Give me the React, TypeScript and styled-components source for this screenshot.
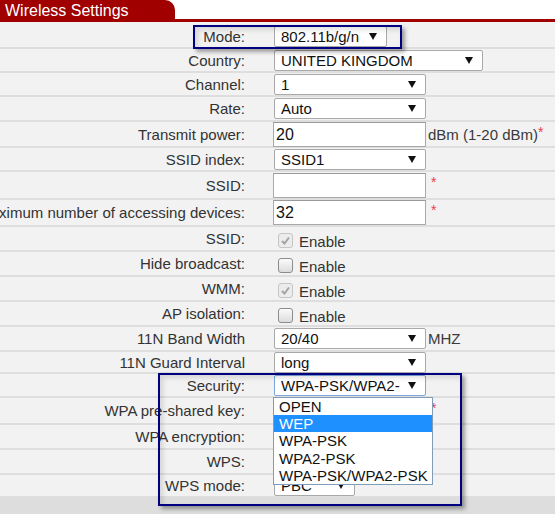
import React from 'react';
import styled, { createGlobalStyle } from 'styled-components';

const GlobalStyle = createGlobalStyle`
  html, body {
    margin: 0;
    padding: 0;
    overflow: hidden;
    background: #dddddd;
  }
  body {
    font-family: "Liberation Sans", Arial, sans-serif;
  }
`;

const Page = styled.div`
  position: relative;
  width: 100%;
  height: 514px;
  overflow: hidden;
  background: #dddddd;
`;

const Header = styled.div`
  display: flex;
  height: 19px;
  background: #ffffff;
`;

const Tab = styled.div`
  width: 175px;
  box-sizing: border-box;
  padding-left: 5px;
  background: #a00000;
  border-top-right-radius: 10px;
  color: #ffffff;
  font-size: 16px;
  line-height: 21px;
  white-space: nowrap;
  overflow: hidden;
`;

const RedRule = styled.div`
  height: 3px;
  background: #a00000;
`;

const Form = styled.div`
  background: #f2f2f2;
`;

const Row = styled.div<{ $h: number; $pt?: number }>`
  display: grid;
  grid-template-columns: 245px 1fr;
  column-gap: 28px;
  align-items: center;
  height: ${({ $h }) => $h}px;
  box-sizing: border-box;
  padding-top: ${({ $pt }) => $pt || 0}px;
  border-bottom: 2px solid #dedede;
`;

const Label = styled.div`
  display: flex;
  justify-content: flex-end;
  white-space: nowrap;
  font-size: 15px;
  color: #333333;
`;

const Cell = styled.div<{ $pt?: number }>`
  display: flex;
  align-items: center;
  min-width: 0;
  padding-top: ${({ $pt }) => $pt || 0}px;
  white-space: nowrap;
`;

const SelectBox = styled.div<{ $w: number; $focus?: boolean }>`
  position: relative;
  width: ${({ $w }) => $w}px;
  height: 21px;
  box-sizing: border-box;
  margin-left: 1px;
  padding: 0 9px 0 6px;
  display: flex;
  align-items: center;
  justify-content: space-between;
  background: #ffffff;
  border: 1px solid ${({ $focus }) => ($focus ? '#7aa7dc' : '#a9a9a9')};
  border-radius: 2px;
  font-size: 15px;
  color: #111111;
`;

const TextInput = styled.input`
  width: 153px;
  height: 25px;
  box-sizing: border-box;
  margin: 0;
  padding: 0 2px;
  border: 1px solid #a9a9a9;
  border-top-color: #9a9a9a;
  background: #ffffff;
  font-family: "Liberation Sans", Arial, sans-serif;
  font-size: 16px;
  color: #111111;
  outline: none;
`;

const Unit = styled.span`
  margin-left: 2px;
  font-size: 15px;
  color: #3a3a3a;
`;

const Required = styled.span<{ $gap?: number }>`
  position: relative;
  top: -3px;
  margin-left: ${({ $gap }) => $gap || 0}px;
  font-size: 14px;
  color: #ec3a4c;
`;

const Check = styled.span<{ $checked?: boolean }>`
  display: inline-flex;
  align-items: center;
  justify-content: center;
  width: 13px;
  height: 13px;
  margin-left: 5px;
  border: 1px solid ${({ $checked }) => ($checked ? '#c6c6c6' : '#8c8c8c')};
  border-radius: 3px;
  background: ${({ $checked }) =>
    $checked ? '#ececec' : 'linear-gradient(#fbfbfb, #dcdcdc)'};
`;

const CheckText = styled.span`
  margin-left: 6px;
  padding-top: 3px;
  font-size: 15px;
  color: #333333;
`;

const OptionList = styled.ul`
  position: absolute;
  top: calc(100% + 2px);
  left: -2px;
  z-index: 5;
  width: 160px;
  box-sizing: border-box;
  margin: 0;
  padding: 0;
  list-style: none;
  background: #ffffff;
  border: 1px solid #7f9db9;
`;

const OptionItem = styled.li<{ $active?: boolean }>`
  height: 17.4px;
  line-height: 17.4px;
  padding-left: 5px;
  font-size: 15px;
  color: ${({ $active }) => ($active ? '#ffffff' : '#111111')};
  background: ${({ $active }) => ($active ? '#1e90ff' : 'transparent')};
`;

const Marker = styled.div<{ $x: number; $y: number; $w: number; $h: number }>`
  position: absolute;
  left: ${({ $x }) => $x}px;
  top: ${({ $y }) => $y}px;
  width: ${({ $w }) => $w}px;
  height: ${({ $h }) => $h}px;
  box-sizing: border-box;
  border: 2px solid #000080;
  box-shadow: 3px 3px 4px rgba(0, 0, 0, 0.35), inset 3px 3px 5px rgba(0, 0, 0, 0.12);
  pointer-events: none;
  z-index: 10;
`;

const Arrow = () => (
  <svg width="8" height="7" viewBox="0 0 8 7">
    <polygon points="0,0 8,0 4,7" fill="#111" />
  </svg>
);

const Tick = () => (
  <svg width="11" height="11" viewBox="0 0 11 11">
    <path d="M2 6 L4.5 8.5 L9 2.5" fill="none" stroke="#a3a3a3" strokeWidth="2" />
  </svg>
);

const Select: React.FC<{ w?: number; value?: string; focus?: boolean; children?: React.ReactNode }> = ({
  w = 152,
  value = '',
  focus,
  children,
}) => (
  <SelectBox $w={w} $focus={focus}>
    <span>{value}</span>
    <Arrow />
    {children}
  </SelectBox>
);

const CheckField: React.FC<{ checked?: boolean }> = ({ checked }) => (
  <>
    <Check $checked={checked}>{checked && <Tick />}</Check>
    <CheckText>Enable</CheckText>
  </>
);

const securityOptions = ['OPEN', 'WEP', 'WPA-PSK', 'WPA2-PSK', 'WPA-PSK/WPA2-PSK'];

const App: React.FC = () => {
  return (
    <Page>
      <GlobalStyle />
      <Header>
        <Tab>Wireless Settings</Tab>
      </Header>
      <RedRule />
      <Form>
        <Row $h={27} $pt={3}>
          <Label>Mode:</Label>
          <Cell>
            <Select w={113} value="802.11b/g/n" />
          </Cell>
        </Row>
        <Row $h={24} $pt={1}>
          <Label>Country:</Label>
          <Cell>
            <Select w={209} value="UNITED KINGDOM" />
          </Cell>
        </Row>
        <Row $h={24}>
          <Label>Channel:</Label>
          <Cell>
            <Select value="1" />
          </Cell>
        </Row>
        <Row $h={25}>
          <Label>Rate:</Label>
          <Cell>
            <Select value="Auto" />
          </Cell>
        </Row>
        <Row $h={26}>
          <Label>Transmit power:</Label>
          <Cell>
            <TextInput defaultValue="20" />
            <Unit>dBm (1-20 dBm)</Unit>
            <Required>*</Required>
          </Cell>
        </Row>
        <Row $h={24}>
          <Label>SSID index:</Label>
          <Cell>
            <Select value="SSID1" />
          </Cell>
        </Row>
        <Row $h={28}>
          <Label>SSID:</Label>
          <Cell>
            <TextInput defaultValue="" />
            <Required $gap={5}>*</Required>
          </Cell>
        </Row>
        <Row $h={27}>
          <Label>Maximum number of accessing devices:</Label>
          <Cell>
            <TextInput defaultValue="32" />
            <Required $gap={5}>*</Required>
          </Cell>
        </Row>
        <Row $h={25}>
          <Label>SSID:</Label>
          <Cell $pt={3}>
            <CheckField checked />
          </Cell>
        </Row>
        <Row $h={25}>
          <Label>Hide broadcast:</Label>
          <Cell $pt={3}>
            <CheckField />
          </Cell>
        </Row>
        <Row $h={25}>
          <Label>WMM:</Label>
          <Cell $pt={3}>
            <CheckField checked />
          </Cell>
        </Row>
        <Row $h={25}>
          <Label>AP isolation:</Label>
          <Cell $pt={3}>
            <CheckField />
          </Cell>
        </Row>
        <Row $h={25}>
          <Label>11N Band Width</Label>
          <Cell>
            <Select value="20/40" />
            <Unit>MHZ</Unit>
          </Cell>
        </Row>
        <Row $h={22}>
          <Label>11N Guard Interval</Label>
          <Cell>
            <Select value="long" />
          </Cell>
        </Row>
        <Row $h={24}>
          <Label>Security:</Label>
          <Cell>
            <Select value="WPA-PSK/WPA2-" focus>
              <OptionList>
                {securityOptions.map((opt) => (
                  <OptionItem key={opt} $active={opt === 'WEP'}>
                    {opt}
                  </OptionItem>
                ))}
              </OptionList>
            </Select>
          </Cell>
        </Row>
        <Row $h={27}>
          <Label>WPA pre-shared key:</Label>
          <Cell>
            <TextInput defaultValue="" />
            <Required $gap={5}>*</Required>
          </Cell>
        </Row>
        <Row $h={25}>
          <Label>WPA encryption:</Label>
          <Cell>
            <Select />
          </Cell>
        </Row>
        <Row $h={25}>
          <Label>WPS:</Label>
          <Cell>
            <Select />
          </Cell>
        </Row>
        <Row $h={23}>
          <Label>WPS mode:</Label>
          <Cell>
            <Select w={81} value="PBC" />
          </Cell>
        </Row>
      </Form>
      <Marker $x={193} $y={25} $w={209} $h={24} />
      <Marker $x={158} $y={373} $w={304} $h={133} />
    </Page>
  );
};

export default App;
